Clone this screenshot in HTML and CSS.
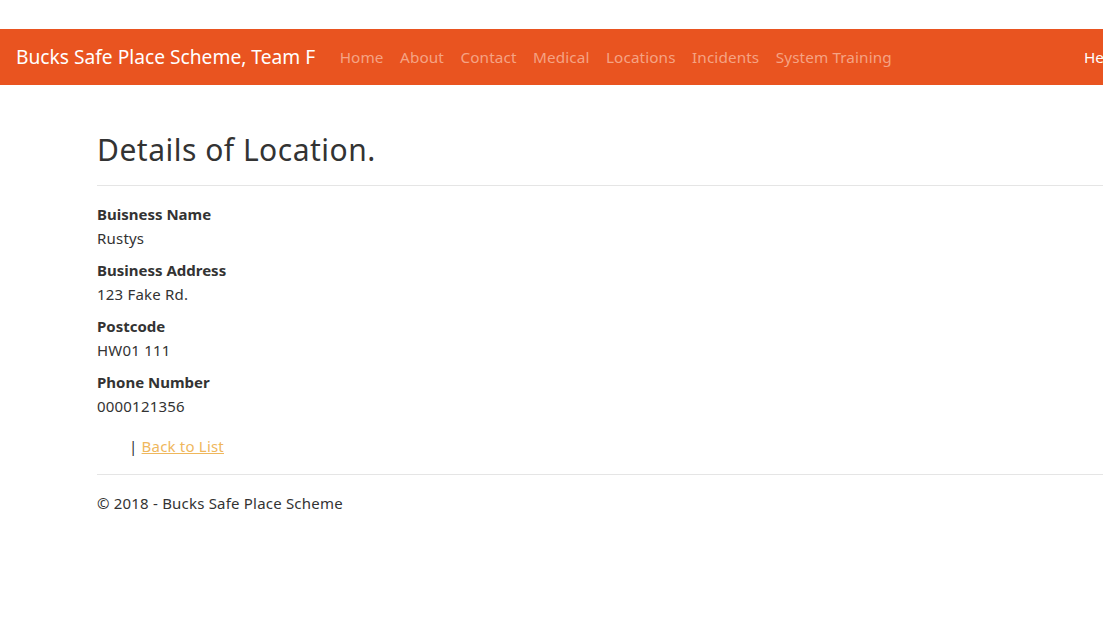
FILE: index.html
```html
<!DOCTYPE html>
<html>
<head>
<meta charset="utf-8">
<title>Details - Bucks Safe Place Scheme</title>
<link rel="stylesheet" href="styles.css">
</head>
<body>
<div class="page">
  <nav class="navbar">
    <a class="brand" href="#">Bucks Safe Place Scheme, Team F</a>
    <ul class="nav">
      <li><a href="#">Home</a></li>
      <li><a href="#">About</a></li>
      <li><a href="#">Contact</a></li>
      <li><a href="#">Medical</a></li>
      <li><a href="#">Locations</a></li>
      <li><a href="#">Incidents</a></li>
      <li><a href="#">System Training</a></li>
    </ul>
    <div class="nav-right"><a href="#">He</a></div>
  </nav>
  <div class="container">
    <h2 class="title">Details of Location.</h2>
    <hr class="rule rule-top">
    <dl class="details">
      <div class="field"><dt>Buisness Name</dt><dd>Rustys</dd></div>
      <div class="field"><dt>Business Address</dt><dd>123 Fake Rd.</dd></div>
      <div class="field"><dt>Postcode</dt><dd>HW01 111</dd></div>
      <div class="field"><dt>Phone Number</dt><dd>0000121356</dd></div>
    </dl>
    <p class="actions">|&nbsp;<a href="#">Back to List</a></p>
    <hr class="rule">
    <footer class="footer">© 2018 - Bucks Safe Place Scheme</footer>
  </div>
</div>
</body>
</html>
```

FILE: styles.css
```css
html, body {
  margin: 0;
  padding: 0;
  background: #fff;
  overflow-x: hidden;
}
body {
  font-family: "Noto Sans", "Open Sans", sans-serif;
  font-size: 15px;
  letter-spacing: 0.2px;
  line-height: 24px;
  color: #333;
}
.page {
  padding-top: 29px;
  width: 1334px;
}
.navbar {
  height: 56px;
  background: #e95420;
  display: flex;
  align-items: center;
  padding: 0 16px;
}
.brand {
  color: #fff;
  font-size: 19.2px;
  letter-spacing: 0;
  text-decoration: none;
  margin-right: 16px;
}
.nav {
  list-style: none;
  margin: 0;
  padding: 0 0 1px;
  display: flex;
}
.nav a {
  display: block;
  padding: 0 8px 0 8.5px;
  color: #f5a384;
  text-decoration: none;
  font-size: 15.3px;
  letter-spacing: 0.1px;
}
.nav-right {
  margin-left: auto;
  width: 234px;
}
.nav-right a {
  color: #fff;
  text-decoration: none;
  font-size: 15.3px;
  letter-spacing: 0;
}
.container {
  margin-left: 97px;
  width: 1140px;
}
.title {
  font-size: 30px;
  font-weight: 400;
  letter-spacing: 0.5px;
  line-height: 36px;
  margin: 0;
  padding-top: 47px;
  color: #333;
}
.rule {
  border: 0;
  border-top: 1px solid #e5e5e5;
  margin: 16px 0;
}
.rule-top {
  margin-top: 17px;
}
.details {
  margin: 0;
  display: flex;
  flex-direction: column;
  gap: 8px;
}
.field dt {
  font-weight: 700;
  letter-spacing: 0;
}
.field dd {
  margin: 0;
}
.actions {
  margin: 16px 0 0;
  padding-left: 32px;
}
.actions a {
  color: #efb75c;
}
```
